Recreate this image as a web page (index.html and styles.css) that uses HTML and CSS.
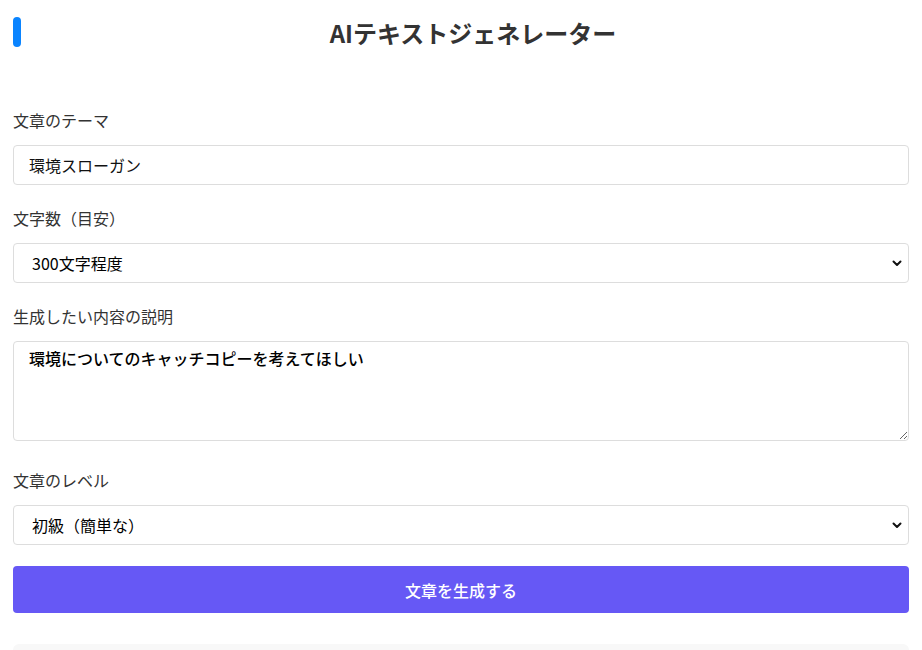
FILE: index.html
```html
<!DOCTYPE html>
<html lang="ja">
<head>
<meta charset="utf-8">
<title>AIテキストジェネレーター</title>
<link rel="stylesheet" href="styles.css">
</head>
<body>
<div class="page">
  <header class="header">
    <span class="accent"></span>
    <h1 class="title">AIテキストジェネレーター</h1>
  </header>
  <form class="form">
    <div class="group">
      <label class="label">文章のテーマ</label>
      <input class="field" type="text" value="環境スローガン">
    </div>
    <div class="group">
      <label class="label">文字数（目安）</label>
      <select class="field select">
        <option>300文字程度</option>
      </select>
    </div>
    <div class="group group-area">
      <label class="label">生成したい内容の説明</label>
      <textarea class="field area">環境についてのキャッチコピーを考えてほしい</textarea>
    </div>
    <div class="group">
      <label class="label">文章のレベル</label>
      <select class="field select">
        <option>初級（簡単な）</option>
      </select>
    </div>
    <button class="submit" type="button">文章を生成する</button>
  </form>
  <div class="result"></div>
</div>
</body>
</html>
```
FILE: styles.css
```css
html, body {
  margin: 0;
  padding: 0;
  background: #fff;
}
body {
  font-family: "Noto Sans CJK JP", "Noto Sans", sans-serif;
  color: #333;
}
.page {
  padding: 0 13px;
}
.header {
  display: flex;
  align-items: flex-start;
  padding-top: 17px;
  height: 93px;
  box-sizing: border-box;
}
.accent {
  width: 8px;
  height: 30px;
  border-radius: 4px;
  background: #0a84ff;
  flex: none;
}
.title {
  flex: 1;
  margin: 0 0 0 16px;
  text-align: center;
  font-size: 24px;
  font-weight: bold;
  line-height: 32px;
  color: #333;
}
.form {
  display: flex;
  flex-direction: column;
  padding-top: 15px;
}
.group {
  display: flex;
  flex-direction: column;
  margin-bottom: 21px;
}
.group-area {
  margin-bottom: 27px;
}
.label {
  font-size: 16px;
  line-height: 24px;
  margin-bottom: 13px;
  color: #333;
}
.field {
  box-sizing: border-box;
  width: 100%;
  height: 40px;
  border: 1px solid #ddd;
  border-radius: 4px;
  padding: 0 15px;
  font-family: "Noto Sans CJK JP", "Noto Sans", sans-serif;
  font-size: 16px;
  color: #111;
  background: #fff;
  outline: none;
  margin: 0;
}
.select {
  appearance: none;
  -webkit-appearance: none;
  padding-left: 18px;
  color: #000;
  background-image: url("data:image/svg+xml;utf8,<svg xmlns='http://www.w3.org/2000/svg' width='10' height='7' viewBox='0 0 10 7'><path d='M1.5 1.5 L5 5 L8.5 1.5' fill='none' stroke='%23111' stroke-width='2' stroke-linecap='round' stroke-linejoin='round'/></svg>");
  background-repeat: no-repeat;
  background-position: right 6px center;
  background-size: 10px 7px;
}
.area {
  height: 100px;
  padding: 4px 15px;
  font-weight: 500;
  color: #000;
  line-height: 24px;
  resize: vertical;
}
.submit {
  height: 47px;
  border: none;
  border-radius: 4px;
  background: #6658f5;
  color: #fff;
  font-family: "Noto Sans CJK JP", "Noto Sans", sans-serif;
  font-size: 16px;
  font-weight: 500;
}
.result {
  margin-top: 31px;
  height: 60px;
  background: #f8f8f8;
  border-radius: 6px;
}
```
